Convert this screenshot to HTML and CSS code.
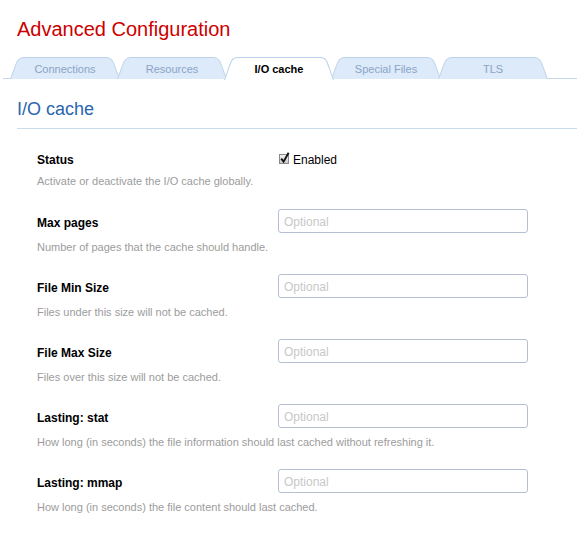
FILE: index.html
```html
<!DOCTYPE html>
<html>
<head>
<meta charset="utf-8">
<link rel="stylesheet" href="styles.css">
</head>
<body>
<div class="page">
  <h1 class="title">Advanced Configuration</h1>
  <nav class="tabs">
    <a class="tab"><svg class="tab-bg" viewBox="0 0 110 22" preserveAspectRatio="none"><path d="M0.5,22 C3,16 6,6 8,3 Q10,0.5 14,0.5 L96,0.5 Q100,0.5 102,3 C104,6 107,16 109.5,22"/></svg><span class="tab-label">Connections</span></a>
    <a class="tab"><svg class="tab-bg" viewBox="0 0 110 22" preserveAspectRatio="none"><path d="M0.5,22 C3,16 6,6 8,3 Q10,0.5 14,0.5 L96,0.5 Q100,0.5 102,3 C104,6 107,16 109.5,22"/></svg><span class="tab-label">Resources</span></a>
    <a class="tab active"><svg class="tab-bg" viewBox="0 0 110 22" preserveAspectRatio="none"><path d="M0.5,22 C3,16 6,6 8,3 Q10,0.5 14,0.5 L96,0.5 Q100,0.5 102,3 C104,6 107,16 109.5,22"/></svg><span class="tab-label">I/O cache</span></a>
    <a class="tab"><svg class="tab-bg" viewBox="0 0 110 22" preserveAspectRatio="none"><path d="M0.5,22 C3,16 6,6 8,3 Q10,0.5 14,0.5 L96,0.5 Q100,0.5 102,3 C104,6 107,16 109.5,22"/></svg><span class="tab-label">Special Files</span></a>
    <a class="tab"><svg class="tab-bg" viewBox="0 0 110 22" preserveAspectRatio="none"><path d="M0.5,22 C3,16 6,6 8,3 Q10,0.5 14,0.5 L96,0.5 Q100,0.5 102,3 C104,6 107,16 109.5,22"/></svg><span class="tab-label">TLS</span></a>
  </nav>
  <section class="panel">
    <h2 class="section-title">I/O cache</h2>
    <div class="fields">
      <div class="field status-field">
        <div class="field-row status-row">
          <span class="label">Status</span>
          <span class="check"><svg class="checkbox" width="14" height="14" viewBox="0 0 14 14"><defs><linearGradient id="cb" x1="0" y1="0" x2="0" y2="1"><stop offset="0" stop-color="#f4f4f4"/><stop offset="1" stop-color="#c8c8c8"/></linearGradient></defs><rect x="1.5" y="3.5" width="9" height="9" fill="url(#cb)" stroke="#8a8a8a"/><path d="M3.2,7.6 L5.6,10.6 L10.6,1.8" fill="none" stroke="#111" stroke-width="1.9"/></svg><span class="check-text">Enabled</span></span>
        </div>
        <p class="desc">Activate or deactivate the I/O cache globally.</p>
      </div>
      <div class="field">
        <div class="field-row">
          <span class="label">Max pages</span>
          <input class="input" type="text" placeholder="Optional">
        </div>
        <p class="desc">Number of pages that the cache should handle.</p>
      </div>
      <div class="field">
        <div class="field-row">
          <span class="label">File Min Size</span>
          <input class="input" type="text" placeholder="Optional">
        </div>
        <p class="desc">Files under this size will not be cached.</p>
      </div>
      <div class="field">
        <div class="field-row">
          <span class="label">File Max Size</span>
          <input class="input" type="text" placeholder="Optional">
        </div>
        <p class="desc">Files over this size will not be cached.</p>
      </div>
      <div class="field">
        <div class="field-row">
          <span class="label">Lasting: stat</span>
          <input class="input" type="text" placeholder="Optional">
        </div>
        <p class="desc">How long (in seconds) the file information should last cached without refreshing it.</p>
      </div>
      <div class="field">
        <div class="field-row">
          <span class="label">Lasting: mmap</span>
          <input class="input" type="text" placeholder="Optional">
        </div>
        <p class="desc">How long (in seconds) the file content should last cached.</p>
      </div>
    </div>
  </section>
</div>
</body>
</html>
```

FILE: styles.css
```css
* { box-sizing: border-box; }

html, body {
  margin: 0;
  padding: 0;
  background: #ffffff;
}

body {
  font-family: "Liberation Sans", Arial, sans-serif;
  color: #000;
}

.page {
  padding-top: 16px;
}

.title {
  margin: 0 0 0 17px;
  font-size: 20px;
  font-weight: normal;
  line-height: 26px;
  color: #cc0000;
}

.tabs {
  display: flex;
  margin: 15px 3px 0 3px;
  padding-left: 7px;
  height: 22px;
  border-bottom: 1px solid #c5d9ea;
}

.tab {
  position: relative;
  width: 110px;
  height: 22px;
  margin-left: -3px;
  display: flex;
  align-items: center;
  justify-content: center;
  font-size: 11px;
  color: #8aa4c6;
  text-decoration: none;
}

.tab:first-child {
  margin-left: 0;
}

.tab-bg {
  position: absolute;
  left: 0;
  top: 0;
  width: 110px;
  height: 22px;
}

.tab-bg path {
  fill: #dceaf9;
  stroke: #bcd2ea;
  stroke-width: 1;
}

.tab.active {
  z-index: 1;
  height: 22px;
  color: #000;
  font-weight: bold;
}

.tab.active .tab-bg {
  height: 23px;
}

.tab.active .tab-bg path {
  fill: #ffffff;
}

.tab-label {
  position: relative;
  padding-top: 2px;
}

.panel {
  margin: 18px 3px 0 17px;
}

.section-title {
  margin: 0;
  font-size: 18px;
  font-weight: normal;
  line-height: 24px;
  color: #2a66ad;
  padding-bottom: 7px;
  border-bottom: 1px solid #c8dcec;
}

.fields {
  padding: 22px 0 0 20px;
}

.field {
  margin-bottom: 20px;
}

.field.status-field {
  margin-bottom: 21px;
}

.field-row {
  display: flex;
  align-items: center;
  height: 24px;
}

.field-row.status-row {
  height: 17px;
}

.label {
  width: 241px;
  padding-top: 3px;
  font-size: 12px;
  font-weight: bold;
  color: #000;
}

.status-row .label {
  padding-top: 1px;
}

.check {
  display: flex;
  align-items: center;
  gap: 1px;
  font-size: 12px;
  color: #000;
}

.checkbox {
  display: block;
  margin-top: -4px;
}

.input {
  width: 250px;
  height: 24px;
  margin: 0;
  padding: 2px 5px 0 5px;
  border: 1px solid #b4c0d2;
  border-radius: 3px;
  font-family: "Liberation Sans", Arial, sans-serif;
  font-size: 12px;
  color: #333;
  background: #fff;
}

.input::placeholder {
  color: #c8c8c8;
}

.desc {
  margin: 7px 0 0 0;
  font-size: 11px;
  line-height: 14px;
  color: #9c9c9c;
}

.status-field .desc {
  margin-top: 6px;
}
```
